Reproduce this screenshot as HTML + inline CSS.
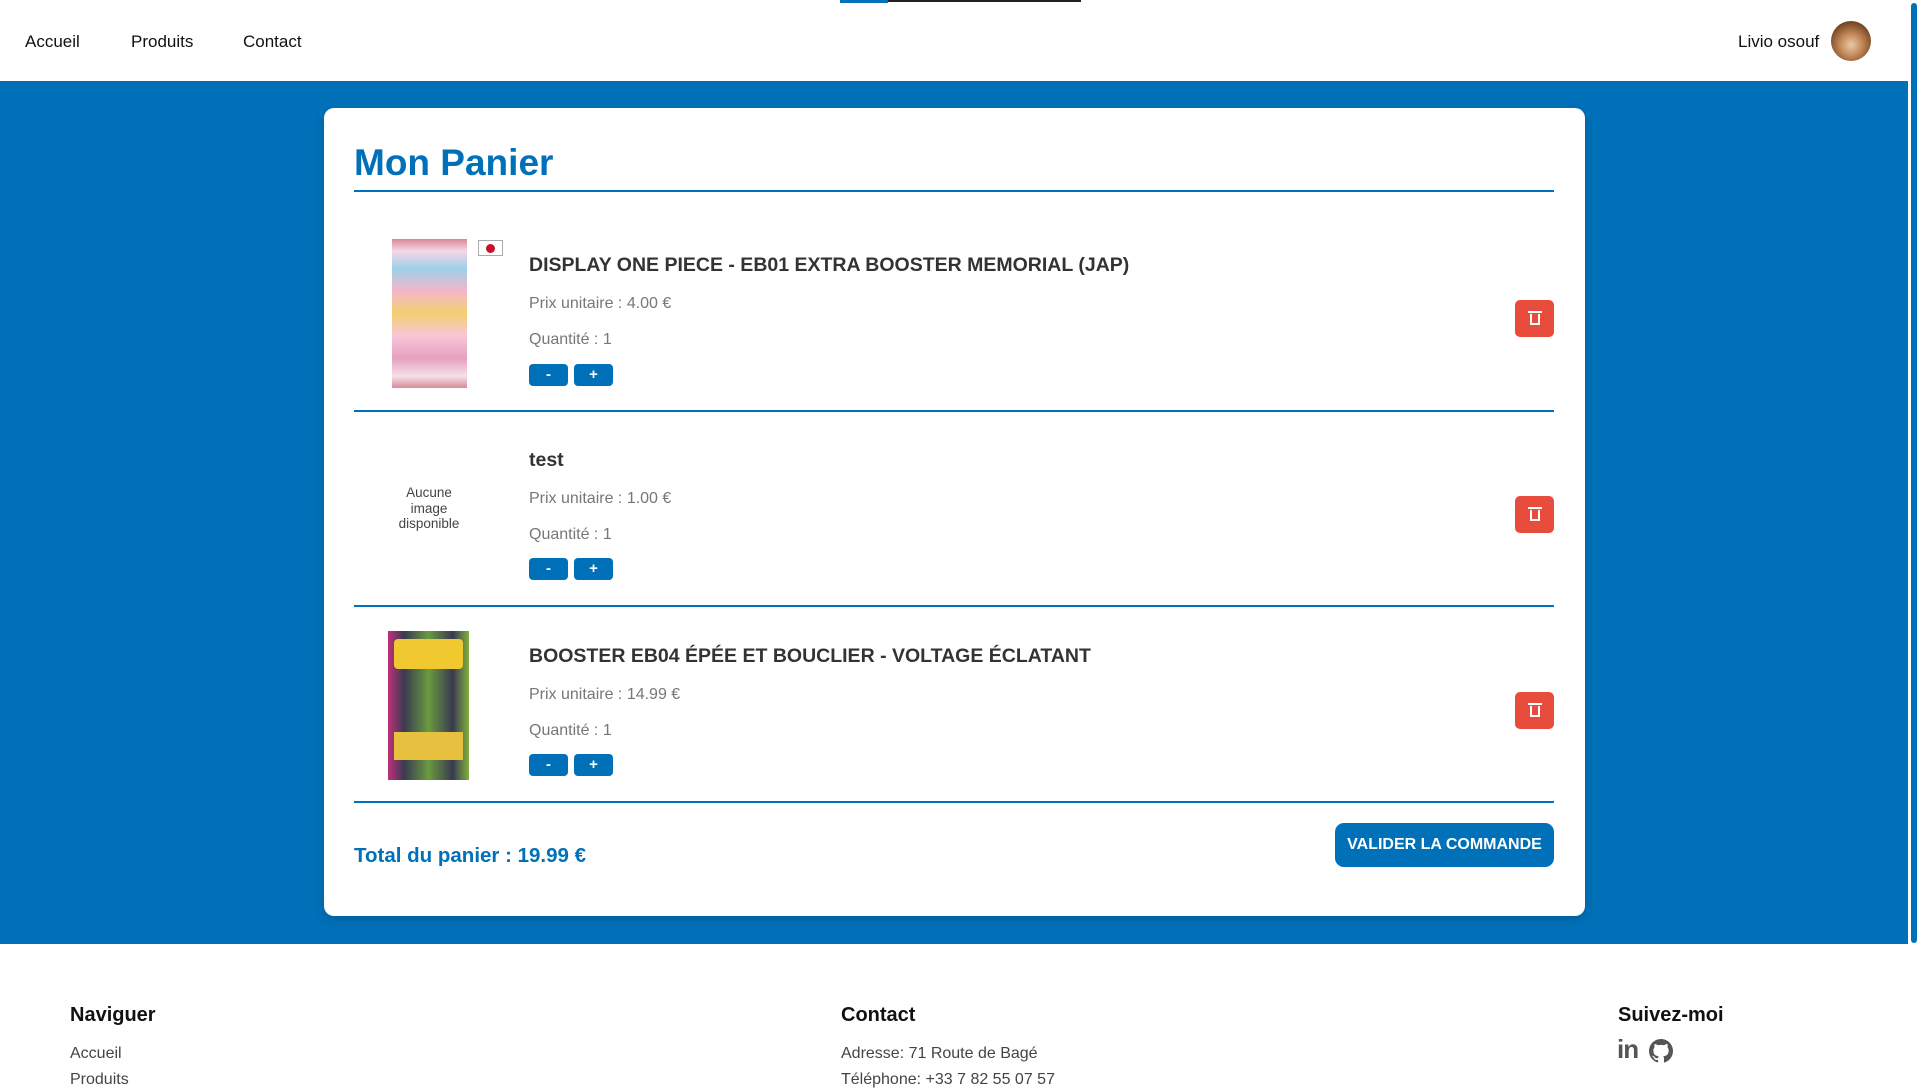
<!DOCTYPE html>
<html><head><meta charset="utf-8"><style>
*{margin:0;padding:0;box-sizing:border-box}
body{width:1920px;height:1080px;overflow:hidden;background:#fff;font-family:"Liberation Sans",sans-serif;position:relative;color:#222}
.a{position:absolute;white-space:nowrap}
.nav{font-size:17px;color:#111;top:32px}
.blue{position:absolute;left:0;top:81px;width:1908px;height:863px;background:#0070b8}
.card{position:absolute;left:324px;top:108px;width:1261px;height:808px;background:#fff;border-radius:10px;box-shadow:0 4px 10px rgba(0,0,0,.15)}
.hr{position:absolute;left:354px;width:1200px;height:2px;background:#0070b8}
.t{font-size:19.5px;font-weight:bold;color:#333;left:529px}
.g{font-size:16px;color:#777;left:529px}
.btn{position:absolute;width:39px;height:22px;background:#0070b8;border-radius:4px;color:#fff;font-weight:bold;font-size:15px;text-align:center;line-height:22px}
.del{position:absolute;left:1515px;width:39px;height:37px;background:#e74c3c;border-radius:5px}
.del i{position:absolute;left:15px;top:14px;width:10px;height:11px;border:2px solid #fff;border-top:none;border-radius:0 0 1px 1px}
.del b{position:absolute;left:13px;top:11px;width:14px;height:2px;background:#fff}
.fh{font-size:20px;font-weight:bold;color:#111;top:1004px}
.fl{font-size:16px;color:#444}
</style></head><body>
<div class="a" style="left:840px;top:0;width:48px;height:3px;background:#0070b8"></div>
<div class="a" style="left:888px;top:0;width:193px;height:2px;background:#222"></div>
<div class="a nav" style="left:25px">Accueil</div>
<div class="a nav" style="left:131px">Produits</div>
<div class="a nav" style="left:243px">Contact</div>
<div class="a nav" style="left:1738px">Livio osouf</div>
<div class="a" style="left:1831px;top:21px;width:40px;height:40px;border-radius:50%;background:radial-gradient(circle at 50% 60%,#e8c9a8 0,#c48a5a 35%,#7a4a28 70%,#4a2c18 100%)"></div>
<div class="a" style="left:1911px;top:3px;width:6px;height:940px;background:#0070b8;border-radius:3px"></div>
<div class="blue"></div>
<div class="card"></div>
<div class="a" style="left:354px;top:142px;font-size:37px;font-weight:bold;color:#0070b8">Mon Panier</div>
<div class="hr" style="top:190px"></div>

<div class="a" style="left:392px;top:239px;width:75px;height:149px;background:linear-gradient(180deg,#d98a96 0,#f6d6e6 8%,#9ed0ea 20%,#f4b6c8 35%,#f3d070 50%,#f8c6d8 65%,#e6a0c0 80%,#f4e0ea 92%,#d88a96 100%)"></div>
<div class="a" style="left:478px;top:240px;width:25px;height:16px;background:#fff;border:1px solid #aaa"><div style="position:absolute;left:7px;top:3px;width:9px;height:9px;border-radius:50%;background:#c8102e"></div></div>
<div class="a t" style="top:254px">DISPLAY ONE PIECE - EB01 EXTRA BOOSTER MEMORIAL (JAP)</div>
<div class="a g" style="top:295px">Prix unitaire : 4.00 €</div>
<div class="a g" style="top:331px">Quantité : 1</div>
<div class="btn" style="left:529px;top:364px">-</div>
<div class="btn" style="left:574px;top:364px">+</div>
<div class="del" style="top:300px"><b></b><i></i></div>
<div class="hr" style="top:410px"></div>

<div class="a" style="left:394px;top:485px;width:70px;text-align:center;white-space:normal;font-size:13.5px;line-height:15.5px;color:#444">Aucune image disponible</div>
<div class="a t" style="top:449px">test</div>
<div class="a g" style="top:490px">Prix unitaire : 1.00 €</div>
<div class="a g" style="top:526px">Quantité : 1</div>
<div class="btn" style="left:529px;top:558px">-</div>
<div class="btn" style="left:574px;top:558px">+</div>
<div class="del" style="top:496px"><b></b><i></i></div>
<div class="hr" style="top:605px"></div>

<div class="a" style="left:388px;top:631px;width:81px;height:149px;background:linear-gradient(90deg,#c0307a 0,#3a3a50 20%,#6a9a40 50%,#3a3a50 80%,#80b040 100%)"><div style="position:absolute;left:6px;top:8px;right:6px;height:30px;background:#f0c830;border-radius:4px"></div><div style="position:absolute;left:6px;bottom:20px;right:6px;height:28px;background:#e8c040"></div></div>
<div class="a t" style="top:645px">BOOSTER EB04 ÉPÉE ET BOUCLIER - VOLTAGE ÉCLATANT</div>
<div class="a g" style="top:686px">Prix unitaire : 14.99 €</div>
<div class="a g" style="top:722px">Quantité : 1</div>
<div class="btn" style="left:529px;top:754px">-</div>
<div class="btn" style="left:574px;top:754px">+</div>
<div class="del" style="top:692px"><b></b><i></i></div>
<div class="hr" style="top:801px"></div>

<div class="a" style="left:354px;top:844px;font-size:20.5px;font-weight:bold;color:#0070b8">Total du panier : 19.99 €</div>
<div class="a" style="left:1335px;top:823px;width:219px;height:44px;background:#0070b8;border-radius:9px;color:#fff;font-weight:bold;font-size:16px;text-align:center;line-height:44px">VALIDER LA COMMANDE</div>

<div class="a fh" style="left:70px">Naviguer</div>
<div class="a fh" style="left:841px">Contact</div>
<div class="a fh" style="left:1618px">Suivez-moi</div>
<div class="a fl" style="left:70px;top:1045px">Accueil</div>
<div class="a fl" style="left:70px;top:1071px">Produits</div>
<div class="a fl" style="left:841px;top:1045px">Adresse: 71 Route de Bagé</div>
<div class="a fl" style="left:841px;top:1071px">Téléphone: +33 7 82 55 07 57</div>
<div class="a" style="left:1617px;top:1034px;font-size:26px;font-weight:bold;color:#555;letter-spacing:-1px">in</div>
<svg class="a" style="left:1649px;top:1039px" width="24" height="24" viewBox="0 0 16 16"><path fill="#555" d="M8 0C3.58 0 0 3.58 0 8c0 3.540 2.29 6.53 5.47 7.59.4.07.55-.17.55-.38v-1.33c-2.23.48-2.7-1.07-2.7-1.07-.36-.92-.89-1.170-.89-1.17-.73-.5.06-.49.06-.49.8.06 1.23.83 1.23.83.71 1.22 1.87.87 2.33.66.07-.52.28-.87.5-1.07-1.78-.2-3.64-.89-3.64-3.95 0-.87.31-1.59.82-2.15-.08-.2-.36-1.020.08-2.12 0 0 .67-.21 2.2.82a7.6 7.6 0 014 0c1.53-1.04 2.2-.82 2.2-.82.44 1.1.16 1.92.08 2.12.51.56.82 1.27.82 2.15 0 3.07-1.87 3.75-3.65 3.95.29.25.54.73.54 1.48v2.2c0 .21.15.46.55.38A8 8 0 0016 8c0-4.42-3.58-8-8-8z"/></svg>
</body></html>
